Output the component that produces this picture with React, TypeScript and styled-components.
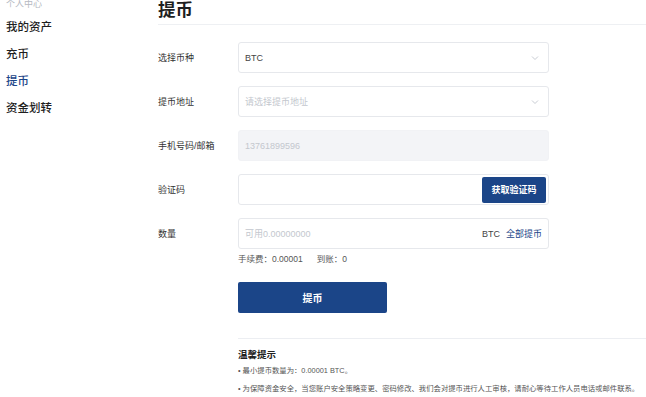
import React from 'react';
import styled, { createGlobalStyle } from 'styled-components';

const GlobalStyle = createGlobalStyle`
  html, body {
    margin: 0;
    padding: 0;
    background: #fff;
    overflow: hidden;
  }
  body {
    font-family: "Liberation Sans", "Noto Sans CJK SC", sans-serif;
    color: #333;
  }
`;

const BLUE = '#1b4588';

const Page = styled.div`
  display: flex;
  width: 646px;
  height: 397px;
  overflow: hidden;
`;

const Sidebar = styled.div`
  width: 158px;
  flex-shrink: 0;
  padding-left: 6px;
  box-sizing: border-box;
`;

const SideHeader = styled.div`
  margin-top: -3px;
  height: 14px;
  line-height: 14px;
  font-size: 9px;
  color: #b5b9c2;
`;

const SideList = styled.div`
  margin-top: 3px;
  display: flex;
  flex-direction: column;
`;

const SideItem = styled.div<{ $active?: boolean }>`
  height: 27px;
  line-height: 27px;
  font-size: 11.5px;
  font-weight: 500;
  color: ${p => (p.$active ? BLUE : '#1e1e1e')};
`;

const Main = styled.div`
  flex: 1;
  display: flex;
  flex-direction: column;
`;

const Title = styled.h1`
  margin: 0;
  font-size: 17.5px;
  line-height: 20px;
  font-weight: 700;
  color: #1f1f1f;
  padding-bottom: 4px;
  border-bottom: 1px solid #eef0f3;
`;

const Form = styled.div`
  margin-top: 17px;
  display: flex;
  flex-direction: column;
  gap: 13px;
  width: 391px;
`;

const Row = styled.div`
  display: flex;
  align-items: center;
`;

const Label = styled.div`
  width: 80px;
  flex-shrink: 0;
  font-size: 9px;
  color: #333;
`;

const Field = styled.div<{ $disabled?: boolean }>`
  flex: 1;
  height: 31px;
  box-sizing: border-box;
  border: 1px solid ${p => (p.$disabled ? '#f1f2f5' : '#e6e8ec')};
  background: ${p => (p.$disabled ? '#f3f4f7' : '#fff')};
  border-radius: 3px;
  display: flex;
  align-items: center;
  padding: 0 2px 0 6px;
  font-size: 9px;
`;

const Value = styled.span<{ $muted?: boolean }>`
  flex: 1;
  color: ${p => (p.$muted ? '#c3c7ce' : '#444')};
`;

const Chevron = styled.svg`
  width: 10px;
  height: 10px;
  margin-right: 6px;
  fill: none;
  stroke: #c8ccd3;
  stroke-width: 1;
`;

const Down = () => (
  <Chevron viewBox="0 0 10 10">
    <polyline points="2,3.5 5,6.5 8,3.5" />
  </Chevron>
);

const CodeButton = styled.button`
  width: 64px;
  height: 26px;
  border: none;
  border-radius: 2px;
  background: ${BLUE};
  color: #fff;
  font-family: inherit;
  font-size: 9px;
  font-weight: 700;
  padding: 0;
`;

const Unit = styled.span`
  font-size: 9px;
  color: #444;
  margin-right: 6px;
`;

const AllLink = styled.span`
  font-size: 9px;
  color: ${BLUE};
  margin-right: 4px;
`;

const Fee = styled.div`
  margin: 4px 0 0 80px;
  line-height: 12px;
  font-size: 8.5px;
  color: #555;
  display: flex;
  gap: 14px;
`;

const Submit = styled.button`
  margin: 17px 0 0 80px;
  width: 149px;
  height: 31px;
  border: none;
  border-radius: 2px;
  background: ${BLUE};
  color: #fff;
  font-family: inherit;
  font-size: 10px;
  font-weight: 700;
`;

const Notes = styled.div`
  margin: 25px 0 0 80px;
  border-top: 1px solid #eceef2;
`;

const NoteTitle = styled.div`
  margin-top: 10px;
  line-height: 12px;
  font-size: 9.5px;
  font-weight: 700;
  color: #222;
`;

const Note = styled.div<{ $gap: number }>`
  margin-top: ${p => p.$gap}px;
  line-height: 12px;
  font-size: 7.35px;
  color: #555;
  white-space: nowrap;
`;

export default function App() {
  return (
    <Page>
      <GlobalStyle />
      <Sidebar>
        <SideHeader>个人中心</SideHeader>
        <SideList>
          <SideItem>我的资产</SideItem>
          <SideItem>充币</SideItem>
          <SideItem $active>提币</SideItem>
          <SideItem>资金划转</SideItem>
        </SideList>
      </Sidebar>
      <Main>
        <Title>提币</Title>
        <Form>
          <Row>
            <Label>选择币种</Label>
            <Field>
              <Value>BTC</Value>
              <Down />
            </Field>
          </Row>
          <Row>
            <Label>提币地址</Label>
            <Field>
              <Value $muted>请选择提币地址</Value>
              <Down />
            </Field>
          </Row>
          <Row>
            <Label>手机号码/邮箱</Label>
            <Field $disabled>
              <Value $muted>13761899596</Value>
            </Field>
          </Row>
          <Row>
            <Label>验证码</Label>
            <Field>
              <Value />
              <CodeButton>获取验证码</CodeButton>
            </Field>
          </Row>
          <Row>
            <Label>数量</Label>
            <Field>
              <Value $muted>可用0.00000000</Value>
              <Unit>BTC</Unit>
              <AllLink>全部提币</AllLink>
            </Field>
          </Row>
        </Form>
        <Fee>
          <span>手续费：0.00001</span>
          <span>到账：0</span>
        </Fee>
        <Submit>提币</Submit>
        <Notes>
          <NoteTitle>温馨提示</NoteTitle>
          <Note $gap={4}>• 最小提币数量为：0.00001 BTC。</Note>
          <Note $gap={6}>• 为保障资金安全，当您账户安全策略变更、密码修改、我们会对提币进行人工审核，请耐心等待工作人员电话或邮件联系。</Note>
        </Notes>
      </Main>
    </Page>
  );
}
